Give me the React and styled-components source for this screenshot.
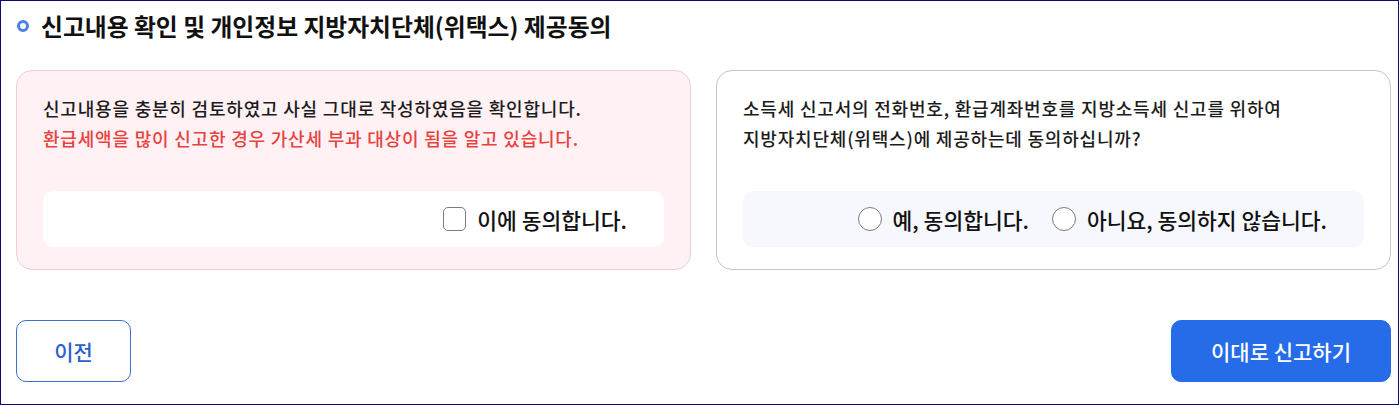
import React, { useState } from "react";
import styled, { createGlobalStyle } from "styled-components";

const GlobalStyle = createGlobalStyle`
  * {
    box-sizing: border-box;
  }
  body {
    margin: 0;
    background: #ffffff;
    font-family: "Noto Sans CJK KR", "Noto Sans", sans-serif;
    color: #111111;
  }
`;

const StyledFrame = styled.div`
  width: 1399px;
  height: 405px;
  border: 1px solid #0c0c6e;
  padding: 10px 7px 0 15px;
  display: flex;
  flex-direction: column;
`;

const StyledTitle = styled.h2`
  display: flex;
  align-items: center;
  gap: 12px;
  margin: 0;
  padding-left: 1px;
  font-size: 23.8px;
  line-height: 30px;
  font-weight: 700;
  color: #111111;
`;

const StyledBullet = styled.span`
  width: 12px;
  height: 12px;
  border: 3px solid #4b82ea;
  border-radius: 50%;
  flex-shrink: 0;
`;

const StyledCards = styled.div`
  display: grid;
  grid-template-columns: 1fr 1fr;
  gap: 25px;
  margin-top: 29px;
`;

const StyledCard = styled.section`
  border: 1px solid ${(p) => (p.$warn ? "#f6ccd6" : "#c6c6c6")};
  background: ${(p) => (p.$warn ? "#fff1f4" : "#ffffff")};
  border-radius: 16px;
  padding: 22px 26px;
`;

const StyledText = styled.p`
  margin: 0;
  font-size: 18px;
  letter-spacing: 0.8px;
  line-height: 30px;
  font-weight: 500;
  color: #1c1c1c;
`;

const StyledRed = styled.span`
  color: #e8423f;
`;

const StyledAnswer = styled.div`
  display: flex;
  align-items: center;
  justify-content: flex-end;
  gap: 23px;
  height: 56px;
  margin-top: 38px;
  padding-right: 37px;
  border-radius: 10px;
  background: ${(p) => (p.$tint ? "#f6f8fd" : "#ffffff")};
`;

const StyledOption = styled.label`
  display: flex;
  align-items: center;
  gap: 11px;
  font-size: 21.5px;
  font-weight: 500;
  color: #111111;
  cursor: pointer;
`;

const StyledCheck = styled.input`
  appearance: none;
  margin: 0;
  width: 23px;
  height: 24px;
  border: 1px solid #7c7c7c;
  border-radius: 5px;
  background: #ffffff;
  &:checked {
    background: #266ce8;
    border-color: #266ce8;
  }
`;

const StyledRadio = styled.input`
  appearance: none;
  margin: 0;
  width: 24px;
  height: 24px;
  border: 1px solid #7c7c7c;
  border-radius: 50%;
  background: #ffffff;
  &:checked {
    border: 7px solid #266ce8;
  }
`;

const StyledActions = styled.div`
  display: flex;
  justify-content: space-between;
  margin-top: 50px;
`;

const StyledButton = styled.button`
  width: ${(p) => (p.$primary ? "220px" : "115px")};
  height: 62px;
  border-radius: 10px;
  border: 1px solid ${(p) => (p.$primary ? "#266ce8" : "#3b6fd4")};
  background: ${(p) => (p.$primary ? "#266ce8" : "#ffffff")};
  color: ${(p) => (p.$primary ? "#ffffff" : "#2c5fcc")};
  font-family: inherit;
  font-size: 21px;
  font-weight: 500;
  cursor: pointer;
`;

const App = () => {
  const [agreed, setAgreed] = useState(false);
  const [share, setShare] = useState("");

  return (
    <>
      <GlobalStyle />
      <StyledFrame>
        <StyledTitle>
          <StyledBullet />
          신고내용 확인 및 개인정보 지방자치단체(위택스) 제공동의
        </StyledTitle>

        <StyledCards>
          <StyledCard $warn>
            <StyledText>
              신고내용을 충분히 검토하였고 사실 그대로 작성하였음을 확인합니다.
              <br />
              <StyledRed>
                환급세액을 많이 신고한 경우 가산세 부과 대상이 됨을 알고 있습니다.
              </StyledRed>
            </StyledText>
            <StyledAnswer>
              <StyledOption>
                <StyledCheck
                  type="checkbox"
                  checked={agreed}
                  onChange={(e) => setAgreed(e.target.checked)}
                />
                이에 동의합니다.
              </StyledOption>
            </StyledAnswer>
          </StyledCard>

          <StyledCard>
            <StyledText>
              소득세 신고서의 전화번호, 환급계좌번호를 지방소득세 신고를 위하여
              <br />
              지방자치단체(위택스)에 제공하는데 동의하십니까?
            </StyledText>
            <StyledAnswer $tint>
              <StyledOption>
                <StyledRadio
                  type="radio"
                  name="share"
                  checked={share === "yes"}
                  onChange={() => setShare("yes")}
                />
                예, 동의합니다.
              </StyledOption>
              <StyledOption>
                <StyledRadio
                  type="radio"
                  name="share"
                  checked={share === "no"}
                  onChange={() => setShare("no")}
                />
                아니요, 동의하지 않습니다.
              </StyledOption>
            </StyledAnswer>
          </StyledCard>
        </StyledCards>

        <StyledActions>
          <StyledButton>이전</StyledButton>
          <StyledButton $primary>이대로 신고하기</StyledButton>
        </StyledActions>
      </StyledFrame>
    </>
  );
};

export default App;
